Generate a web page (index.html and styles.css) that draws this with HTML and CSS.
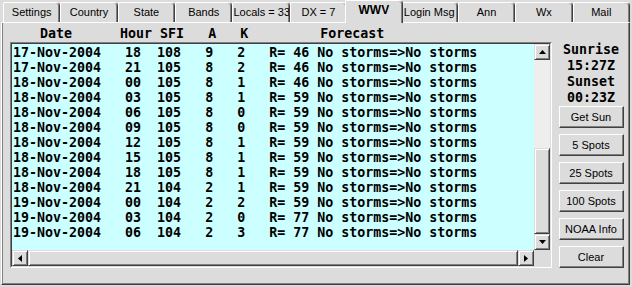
FILE: index.html
```html
<!DOCTYPE html>
<html lang="en">
<head>
    <meta charset="UTF-8">
    <meta name="viewport" content="width=device-width, initial-scale=1.0">
    <title>WWV</title>
    <link rel="stylesheet" href="styles.css">
</head>
<body>

    <div class="tabs">
        <div class="tab">Settings</div>
        <div class="tab">Country</div>
        <div class="tab">State</div>
        <div class="tab">Bands</div>
        <div class="tab">Locals = 33</div>
        <div class="tab">DX = 7</div>
        <div class="tab active">WWV</div>
        <div class="tab">Login Msg</div>
        <div class="tab">Ann</div>
        <div class="tab">Wx</div>
        <div class="tab">Mail</div>
    </div>

    <div class="panel">
        <div class="header">   Date      Hour SFI   A   K         Forecast</div>

        <div class="main">
            <div class="list">
                <div class="list-inner">
                    <div class="list-top">
                        <div class="rows" id="rows"></div>
                        <div class="vscroll">
                            <div class="sbtn">
                                <svg width="7" height="4" viewBox="0 0 7 4"><polygon points="3.5,0 7,4 0,4" fill="#000"/></svg>
                            </div>
                            <div class="vtrack"></div>
                            <div class="vthumb"></div>
                            <div class="sbtn">
                                <svg width="7" height="4" viewBox="0 0 7 4"><polygon points="0,0 7,0 3.5,4" fill="#000"/></svg>
                            </div>
                        </div>
                    </div>
                    <div class="hscroll">
                        <div class="sbtn">
                            <svg width="4" height="7" viewBox="0 0 4 7"><polygon points="4,0 4,7 0,3.5" fill="#000"/></svg>
                        </div>
                        <div class="hthumb"></div>
                        <div class="sbtn">
                            <svg width="4" height="7" viewBox="0 0 4 7"><polygon points="0,0 4,3.5 0,7" fill="#000"/></svg>
                        </div>
                        <div class="corner"></div>
                    </div>
                </div>
            </div>

            <div class="side">
                <div class="sun">Sunrise</div>
                <div class="sun">15:27Z</div>
                <div class="sun">Sunset</div>
                <div class="sun">00:23Z</div>
                <button class="btn">Get Sun</button>
                <button class="btn">5 Spots</button>
                <button class="btn">25 Spots</button>
                <button class="btn">100 Spots</button>
                <button class="btn">NOAA Info</button>
                <button class="btn">Clear</button>
            </div>
        </div>
    </div>

    <script>
        // date, hour, sfi, a, k, r
        const data = [
            ['17-Nov-2004', '18', '108', '9', '2', '46'],
            ['17-Nov-2004', '21', '105', '8', '2', '46'],
            ['18-Nov-2004', '00', '105', '8', '1', '46'],
            ['18-Nov-2004', '03', '105', '8', '1', '59'],
            ['18-Nov-2004', '06', '105', '8', '0', '59'],
            ['18-Nov-2004', '09', '105', '8', '0', '59'],
            ['18-Nov-2004', '12', '105', '8', '1', '59'],
            ['18-Nov-2004', '15', '105', '8', '1', '59'],
            ['18-Nov-2004', '18', '105', '8', '1', '59'],
            ['18-Nov-2004', '21', '104', '2', '1', '59'],
            ['19-Nov-2004', '00', '104', '2', '2', '59'],
            ['19-Nov-2004', '03', '104', '2', '0', '77'],
            ['19-Nov-2004', '06', '104', '2', '3', '77']
        ];

        const rows = document.getElementById('rows');
        data.forEach(function(d) {
            const line = document.createElement('div');
            line.className = 'row';
            line.textContent = d[0] + '   ' + d[1] + '  ' + d[2] + '   ' + d[3] + '   ' + d[4] +
                '   R= ' + d[5] + ' No storms=>No storms';
            rows.appendChild(line);
        });
    </script>

</body>
</html>
```

FILE: styles.css
```css
body {
    margin: 0;
    width: 632px;
    height: 287px;
    background-color: #dcdcdc;
    font-family: "Liberation Sans", Arial, sans-serif;
    font-size: 11px;
    color: #000;
    overflow: hidden;
}

.tabs {
    display: flex;
    align-items: flex-end;
    height: 22px;
    padding: 0 2px 0 3px;
    box-sizing: border-box;
}

.tab {
    flex: 1;
    height: 20px;
    box-sizing: border-box;
    border-top: 1px solid #fff;
    border-left: 1px solid #fff;
    border-right: 1px solid #404040;
    border-radius: 2px 4px 0 0;
    box-shadow: inset -1px 0 0 #808080;
    text-align: center;
    line-height: 18px;
    white-space: nowrap;
    overflow: hidden;
}

.tab.active {
    position: relative;
    z-index: 1;
    height: 23px;
    margin: 0 -2px -1px -2px;
    padding-bottom: 2px;
    font-weight: bold;
    font-size: 12px;
    line-height: 19px;
    background-color: #dcdcdc;
}

.panel {
    margin-left: 1px;
    width: 629px;
    height: 263px;
    box-sizing: border-box;
    border-top: 1px solid #fff;
    border-left: 1px solid #fff;
    border-right: 1px solid #404040;
    border-bottom: 1px solid #404040;
    box-shadow: inset 1px 0 0 #808080, inset -1px -1px 0 #808080;
}

.header,
.row,
.sun {
    font-family: "DejaVu Sans Mono", "Liberation Mono", monospace;
    font-weight: bold;
    font-size: 13.3px;
    white-space: pre;
}

.header {
    margin-top: 3px;
    padding-left: 14px;
    line-height: 15px;
}

.main {
    display: flex;
    margin-top: 1px;
}

.list {
    margin-left: 8px;
    width: 542px;
    height: 226px;
    box-sizing: border-box;
    border: 1px solid;
    border-color: #808080 #fff #fff #808080;
}

.list-inner {
    height: 100%;
    box-sizing: border-box;
    border: 1px solid;
    border-color: #404040 #dcdcdc #dcdcdc #404040;
    display: flex;
    flex-direction: column;
}

.list-top {
    display: flex;
    height: 206px;
}

.rows {
    flex: 1;
    background-color: #ccffff;
    padding-top: 1px;
    padding-left: 1px;
    overflow: hidden;
}

.row {
    line-height: 15px;
}

.vscroll {
    width: 16px;
    display: flex;
    flex-direction: column;
    background-color: #eeeeee;
}

.sbtn,
.vthumb,
.hthumb {
    box-sizing: border-box;
    background-color: #dcdcdc;
    border: 1px solid;
    border-color: #dcdcdc #404040 #404040 #dcdcdc;
    box-shadow: inset 1px 1px 0 #fff, inset -1px -1px 0 #808080;
}

.sbtn {
    width: 16px;
    height: 16px;
    display: flex;
    align-items: center;
    justify-content: center;
    flex: none;
}

.vtrack {
    height: 88px;
}

.vthumb {
    flex: 1;
}

.hscroll {
    display: flex;
    height: 16px;
}

.hthumb {
    flex: 1;
}

.corner {
    width: 16px;
    background-color: #dcdcdc;
}

.side {
    width: 70px;
    margin-left: 4px;
    display: flex;
    flex-direction: column;
    align-items: center;
}

.sun {
    line-height: 16px;
}

.btn {
    width: 65px;
    height: 22px;
    margin-top: 6px;
    padding: 0;
    font-family: "Liberation Sans", Arial, sans-serif;
    font-size: 11px;
    color: #000;
    background-color: #dcdcdc;
    border: 1px solid;
    border-color: #fff #404040 #404040 #fff;
    box-shadow: inset -1px -1px 0 #808080;
}

.sun + .btn {
    margin-top: 0;
}
```
